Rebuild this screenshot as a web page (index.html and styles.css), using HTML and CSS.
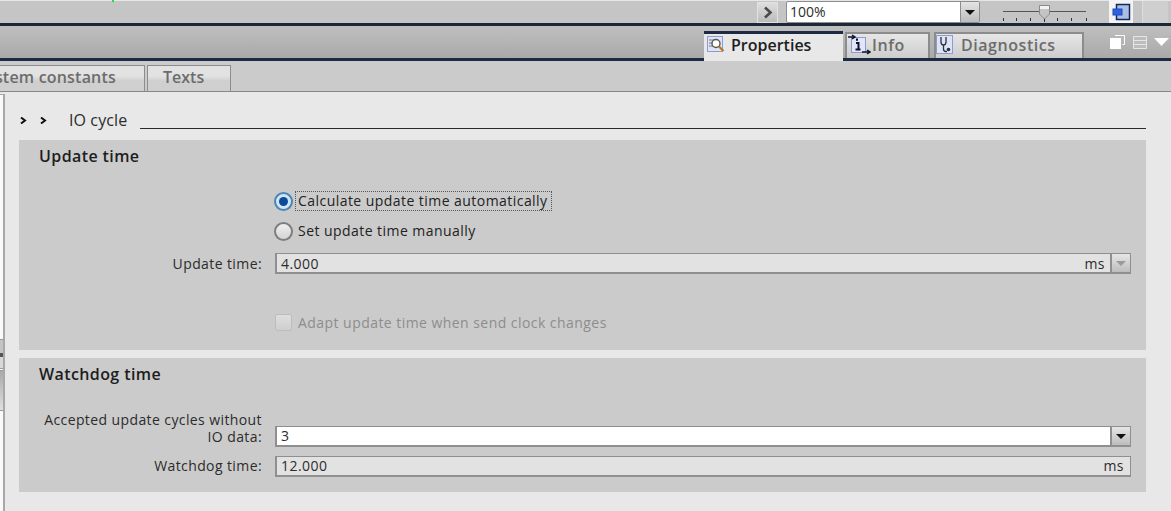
FILE: index.html
```html
<!DOCTYPE html>
<html lang="en">
<head>
    <meta charset="UTF-8">
    <title>IO cycle properties</title>
    <link rel="stylesheet" href="styles.css">
</head>
<body>
    <div class="toolbar">
        <span class="green-dot"></span>
        <button class="nav-btn">
            <svg width="10" height="13" viewBox="0 0 10 13"><path d="M2 1.500 L7.500 6.500 L2 11.500" fill="none" stroke="#4a4a4a" stroke-width="2.600"/></svg>
        </button>
        <div class="zoom-select">
            <span class="zoom-value">100%</span>
            <span class="zoom-arrow"><i class="arrow"></i></span>
        </div>
        <svg class="slider" width="86" height="21" viewBox="0 0 86 21">
            <path d="M1 9.500 H37 M48 9.500 H84" stroke="#555" fill="none"/>
            <path d="M1.500 16v3M14.500 16v3M28.500 16v3M55.500 16v3M69.500 16v3M84.500 16v3" stroke="#333" fill="none"/>
            <path d="M42.500 15v5" stroke="#333" fill="none"/>
            <path d="M37.500 3.500 H47.500 V12 L42.500 17 L37.500 12 Z" fill="#c4c4c4" stroke="#8a8a8a"/>
            <rect x="38" y="4" width="9" height="3" fill="#f2f2f2"/>
        </svg>
        <div class="fit-btn">
            <svg width="19" height="18" viewBox="0 0 19 18">
                <rect x="4.500" y="1.500" width="13" height="15" fill="#a9bfe6" stroke="#14285e" stroke-width="1.500"/>
                <rect x="1" y="6" width="9" height="6" fill="#2f62e0" stroke="#1e48c0"/>
            </svg>
        </div>
        <div class="toolbar-end"></div>
    </div>

    <div class="tabbar">
        <div class="tab tab-active">
            <svg width="22" height="20" viewBox="0 0 22 20">
                <rect x="3.500" y="1.500" width="15" height="15" fill="#dfe4f5" stroke="#8f9ad0"/>
                <path d="M5 5h5M5 8h4M5 11h5" stroke="#777"/>
                <circle cx="12" cy="8.500" r="4" fill="#fff" stroke="#555" stroke-width="1.400"/>
                <path d="M15 11.500 L19.500 16" stroke="#b8741c" stroke-width="2.200"/>
            </svg>
            <span>Properties</span>
        </div>
        <div class="tab tab-info">
            <svg width="23" height="22" viewBox="0 0 23 22">
                <rect x="3.500" y="3.500" width="14" height="15" fill="#e2e6f8" stroke="#8f9ad0"/>
                <path d="M0 3 H6 M4 1 L7 3 L4 5" fill="none" stroke="#0c1630" stroke-width="1.500"/>
                <path d="M9 4.500v2.200M8 9h2.500v6.500M7.500 15.500h5" fill="none" stroke="#0c1630" stroke-width="2"/>
                <path d="M14 18 H21 M19 16 L22 18 L19 20" fill="none" stroke="#0c1630" stroke-width="1.500"/>
            </svg>
            <span>Info</span>
        </div>
        <div class="tab tab-diag">
            <svg width="18" height="20" viewBox="0 0 18 20">
                <rect x="0.500" y="0.500" width="16" height="18" fill="#dfe4f5" stroke="#8f9ad0"/>
                <path d="M5 2v5q0 3 2.500 3t2.500-3V2M7.500 10v4q0 2.500 2.500 2.500h1" fill="none" stroke="#2a3242" stroke-width="1.300"/>
                <circle cx="12.500" cy="14.500" r="1.800" fill="#2a3242"/>
            </svg>
            <span>Diagnostics</span>
        </div>
        <div class="tabbar-icons">
            <svg width="16" height="14" viewBox="0 0 16 14">
                <path d="M5 0.500h9.500v9h-2" fill="none" stroke="#fff"/>
                <rect x="0" y="3" width="11" height="11" fill="#fff"/>
            </svg>
            <svg width="14" height="13" viewBox="0 0 14 13">
                <path d="M0.500 0.500h13v12h-13zM0.500 4.500h13M0.500 8.500h13" fill="#bdbdbd" stroke="#e6e6e6"/>
            </svg>
            <svg width="15" height="8" viewBox="0 0 15 8"><path d="M0 0H15L7.500 8Z" fill="#fff"/></svg>
        </div>
    </div>

    <div class="subtabs">
        <div class="subtab subtab-system"><span>System constants</span></div>
        <div class="subtab subtab-texts">Texts</div>
    </div>

    <div class="content">
        <div class="side-strip">
            <span class="strip-mark"></span>
            <span class="strip-mark strip-mark-low"></span>
        </div>
        <div class="main">
            <div class="section-head">
                <span class="chevrons">
                    <svg width="7" height="7" viewBox="0 0 7 7"><path d="M1 0.500 L5 3.500 L1 6.500" fill="none" stroke="#111" stroke-width="2"/></svg>
                    <svg width="7" height="7" viewBox="0 0 7 7"><path d="M1 0.500 L5 3.500 L1 6.500" fill="none" stroke="#111" stroke-width="2"/></svg>
                </span>
                <span class="section-title">IO cycle</span>
                <span class="section-line"></span>
            </div>

            <section class="panel panel-update">
                <h2>Update time</h2>
                <div class="row row-radio1">
                    <span class="label"></span>
                    <span class="radio radio-on"><i></i></span>
                    <span class="focus-text">Calculate update time automatically</span>
                </div>
                <div class="row row-radio2">
                    <span class="label"></span>
                    <span class="radio"></span>
                    <span class="radio-text">Set update time manually</span>
                </div>
                <div class="row row-update">
                    <span class="label">Update time:</span>
                    <div class="field field-grey">
                        <span class="value">4.000</span>
                        <span class="unit">ms</span>
                        <span class="drop drop-off"><i class="arrow"></i></span>
                    </div>
                </div>
                <div class="row row-check">
                    <span class="label"></span>
                    <span class="checkbox"></span>
                    <span class="check-text">Adapt update time when send clock changes</span>
                </div>
            </section>

            <section class="panel panel-watchdog">
                <h2>Watchdog time</h2>
                <div class="row row-cycles">
                    <span class="label">Accepted update cycles without<br>IO data:</span>
                    <div class="field field-white">
                        <span class="value">3</span>
                        <span class="drop"><i class="arrow"></i></span>
                    </div>
                </div>
                <div class="row row-watchdog">
                    <span class="label">Watchdog time:</span>
                    <div class="field field-grey">
                        <span class="value">12.000</span>
                        <span class="unit unit-end">ms</span>
                    </div>
                </div>
            </section>
        </div>
    </div>
</body>
</html>
```

FILE: styles.css
```css
* {
    box-sizing: border-box;
}

html, body {
    height: 100%;
}

body {
    margin: 0;
    width: 1171px;
    height: 511px;
    overflow: hidden;
    display: flex;
    flex-direction: column;
    font-family: "Open Sans", "Noto Sans", sans-serif;
    font-size: 14px;
    color: #2c2c2c;
    background: #e8e8e8;
}

/* top toolbar */
.toolbar {
    position: relative;
    height: 26px;
    flex: none;
    display: flex;
    align-items: flex-start;
    background: #c5c5c5;
    border-top: 1px solid #e6e6e6;
    border-bottom: 3px solid #1c2738;
    padding-left: 757px;
}

.green-dot {
    position: absolute;
    left: 112px;
    top: -1px;
    width: 2px;
    height: 2px;
    background: #22dd44;
}

.nav-btn {
    width: 21px;
    height: 21px;
    margin: 1px 8px 0 0;
    padding: 0;
    display: flex;
    align-items: center;
    justify-content: center;
    background: linear-gradient(#dedede, #bcbcbc);
    border: 1px solid #e2e2e2;
}

.zoom-select {
    width: 194px;
    height: 22px;
    display: flex;
    background: #fff;
    border: 1px solid #8d8d8d;
    border-radius: 2px;
}

.zoom-value {
    flex: 1;
    padding-left: 3px;
    font-size: 14px;
    line-height: 20px;
}

.zoom-arrow {
    width: 19px;
    display: flex;
    align-items: center;
    justify-content: center;
    background: linear-gradient(#e4e4e4, #bcbcbc);
    border-left: 1px solid #8d8d8d;
}

.arrow {
    width: 0;
    height: 0;
    border-left: 5px solid transparent;
    border-right: 5px solid transparent;
    border-top: 5px solid #111;
}

.slider {
    margin: 1px 0 0 22px;
}

.fit-btn {
    width: 24px;
    height: 23px;
    margin: -1px 0 0 21px;
    display: flex;
    align-items: center;
    justify-content: center;
    background: #f4f4f4;
}

.toolbar-end {
    width: 26px;
    height: 22px;
    margin-left: 9px;
    background: #cfcfcf;
    border-left: 1px solid #ddd;
}

/* properties / info / diagnostics */
.tabbar {
    height: 35px;
    flex: none;
    display: flex;
    align-items: flex-start;
    padding-left: 704px;
    background: linear-gradient(#bfbfbf, #a9a9a9);
    border-bottom: 3px solid #1c2a44;
}

.tab {
    display: flex;
    align-items: center;
    margin-top: 6px;
    height: 26px;
    padding-bottom: 3px;
    font-size: 16px;
    font-weight: 600;
    letter-spacing: 0.55px;
    color: #6c6c6c;
    background: linear-gradient(#e6e6e6, #cdcdcd);
    border: 2px solid #8c8c8c;
    border-bottom: 0;
}

.tab-active {
    position: relative;
    z-index: 1;
    width: 139px;
    height: 30px;
    margin-top: 5px;
    gap: 5px;
    padding: 0 0 5px 0;
    letter-spacing: 0;
    color: #1d1d1d;
    background: #e8e8e8;
    border: 0;
    border-top: 3px solid #1c2a44;
}

.tab-info {
    width: 85px;
    margin-left: 2px;
    gap: 1px;
    padding-left: 1px;
}

.tab-diag {
    width: 150px;
    margin-left: 4px;
    gap: 7px;
    padding-left: 0;
}

.tabbar-icons {
    display: flex;
    align-items: center;
    gap: 7px;
    margin: 9px 0 0 26px;
}

/* second row of tabs */
.subtabs {
    height: 31px;
    flex: none;
    display: flex;
    align-items: flex-end;
    background: #cbcbcb;
    border-bottom: 1px solid #888;
}

.subtab {
    height: 26px;
    font-size: 16px;
    font-weight: 600;
    line-height: 22px;
    color: #6c6c6c;
    background: linear-gradient(#e2e2e2 40%, #cfcfcf 60%);
    border: 1px solid #8c8c8c;
    border-bottom: 0;
}

.subtab-system {
    width: 145px;
    overflow: hidden;
    white-space: nowrap;
    direction: rtl;
    padding-right: 28px;
    letter-spacing: 0.2px;
    border-left: 0;
}

.subtab-texts {
    width: 84px;
    margin-left: 2px;
    padding-left: 15px;
}

/* body */
.content {
    flex: 1;
    display: flex;
    min-height: 0;
}

.side-strip {
    width: 5px;
    flex: none;
    margin-top: 2px;
    padding-top: 244px;
    background: #fafafa;
    border-top: 1px solid #a8a8a8;
    border-right: 2px solid #a8a8a8;
}

.strip-mark {
    display: block;
    height: 30px;
    background: linear-gradient(#c4c4c4 45%, #555 45%, #555 60%, #d8d8d8 60%);
    border-top: 1px solid #999;
    border-bottom: 1px solid #999;
}

.strip-mark-low {
    height: 41px;
    margin-top: 1px;
    background: linear-gradient(#a8a8a8, #e0e0e0);
}

.main {
    flex: 1;
    padding: 12px 25px 0 14px;
}

.section-head {
    height: 32px;
    margin-bottom: 4px;
    display: flex;
    align-items: center;
}

.chevrons {
    display: flex;
    gap: 13px;
    margin: 0 0 0 1px;
}

.section-title {
    margin-left: 22px;
    font-size: 16px;
    letter-spacing: 0.1px;
}

.section-line {
    flex: 1;
    height: 1px;
    margin: 16px 0 0 13px;
    background: #2a2a2a;
}

.panel {
    background: #cbcbcb;
}

.panel h2 {
    margin: 0;
    padding-left: 20px;
    font-size: 16px;
    font-weight: 600;
    letter-spacing: 0.4px;
    line-height: 20px;
    color: #1d1d1d;
}

.panel-update {
    height: 210px;
    padding-top: 6px;
}

.panel-watchdog {
    height: 134px;
    margin-top: 8px;
    padding-top: 6px;
}

.row {
    display: flex;
    align-items: center;
    padding-right: 15px;
}

.label {
    flex: none;
    width: 243px;
    margin-right: 13px;
    text-align: right;
    font-size: 14px;
    line-height: 17px;
    letter-spacing: 0.4px;
}

.radio {
    position: relative;
    width: 19px;
    height: 19px;
    flex: none;
    margin-left: -1px;
    border-radius: 50%;
    background: linear-gradient(#f0f0f0, #d4d4d4);
    border: 2px solid #7e7e7e;
}

.radio-on {
    background: #cfe6f7;
    border-color: #4b86b5;
}

.radio-on i {
    position: absolute;
    left: 3px;
    top: 3px;
    width: 9px;
    height: 9px;
    border-radius: 50%;
    background: #0d4a99;
}

.focus-text {
    margin-left: 2px;
    padding: 0 3px 0 2px;
    font-size: 14px;
    line-height: 18px;
    letter-spacing: 0.45px;
    color: #222;
    border: 1px dotted #555;
}

.radio-text {
    margin-left: 5px;
    padding-bottom: 2px;
    font-size: 14px;
    letter-spacing: 0.45px;
    color: #222;
}

.row-radio1 {
    height: 20px;
    margin-top: 25px;
}

.row-radio2 {
    height: 20px;
    margin-top: 10px;
}

.row-update {
    margin-top: 12px;
}

.row-check {
    height: 20px;
    margin-top: 38px;
}

.checkbox {
    width: 17px;
    height: 17px;
    flex: none;
    border: 1px solid #bdbdbd;
    border-radius: 2px;
    background: linear-gradient(#dedede, #cfcfcf);
}

.check-text {
    margin-left: 6px;
    font-size: 14px;
    letter-spacing: 0.45px;
    color: #8d8d8d;
}

.field {
    flex: 1;
    height: 21px;
    display: flex;
    align-items: center;
    border: 1px solid #8f8f8f;
    border-width: 1px 1px 2px 2px;
    font-size: 14px;
}

.field-grey {
    background: #e2e2e2;
}

.field-white {
    background: #fff;
}

.value {
    flex: 1;
    padding-left: 4px;
    letter-spacing: 0.45px;
}

.unit {
    margin-right: 5px;
    letter-spacing: 0.45px;
}

.unit-end {
    margin-right: 6px;
}

.drop {
    width: 20px;
    height: 100%;
    display: flex;
    align-items: center;
    justify-content: center;
    background: linear-gradient(#e6e6e6, #bdbdbd);
    border-left: 2px solid #8f8f8f;
}

.drop-off .arrow {
    border-top-color: #9a9a9a;
}

.row-cycles {
    margin-top: 27px;
    align-items: flex-end;
}

.row-cycles .label {
    margin-bottom: 2px;
}

.row-cycles .value,
.row-watchdog .value,
.row-watchdog .unit,
.row-watchdog .label {
    padding-bottom: 2px;
}

.row-watchdog {
    margin-top: 9px;
}
```
